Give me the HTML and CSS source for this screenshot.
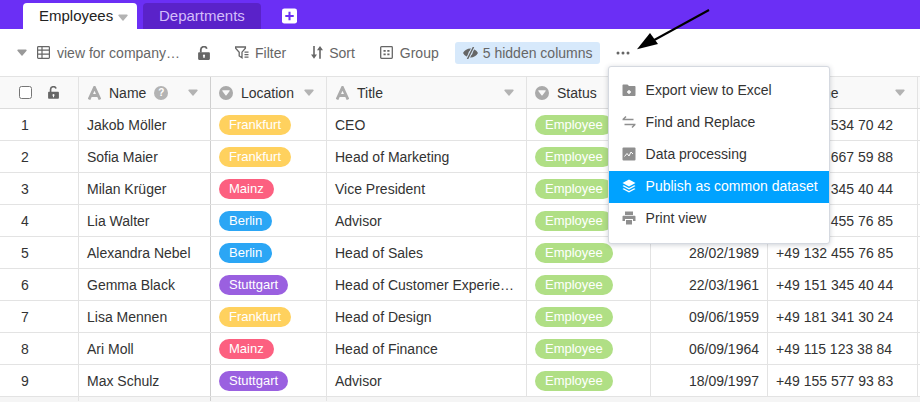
FILE: index.html
```html
<!DOCTYPE html>
<html lang="en">
<head>
    <meta charset="UTF-8">
    <meta name="viewport" content="width=device-width, initial-scale=1.0">
    <title>Employees</title>
    <link rel="stylesheet" href="styles.css">
</head>
<body>
    <svg class="defs" width="0" height="0">
        <symbol id="caret" viewBox="0 0 10 7"><path d="M1 .6h8a.7.7 0 0 1 .55 1.1L5.500 6.400a.7.7 0 0 1-1 0L.45 1.700A.7.7 0 0 1 1 .6z"/></symbol>
        <symbol id="lock" viewBox="0 0 12 14"><path d="M1.200 6.200h9.600c.6 0 1.100.5 1.100 1.100v5.500c0 .6-.5 1.100-1.100 1.100H1.200c-.6 0-1.100-.5-1.100-1.100V7.300c0-.6.5-1.100 1.100-1.100zM6 8.600a1.200 1.200 0 0 0-.6 2.200v1.300h1.200v-1.300A1.200 1.200 0 0 0 6 8.600z"/><path d="M2.800 6.500V3.600a3.100 3.100 0 0 1 6-.9" fill="none" stroke="currentColor" stroke-width="1.800"/></symbol>
        <symbol id="letter" viewBox="0 0 13 14"><path d="M1 13.500 6.500 1.500 12 13.500M3 9.500h7" fill="none" stroke="currentColor" stroke-width="2.800"/></symbol>
        <symbol id="select" viewBox="0 0 14 14"><path d="M7 0a7 7 0 1 1 0 14A7 7 0 0 1 7 0zM3.300 5l3.200 4.300c.3.300.7.300 1 0L10.700 5c.2-.3 0-.7-.4-.7H3.700c-.4 0-.6.400-.4.700z" fill-rule="evenodd"/></symbol>
    </svg>

    <div class="topbar">
        <div class="tab tab-active">Employees <svg class="caret caret-tab"><use href="#caret"/></svg></div>
        <div class="tab tab-other">Departments</div>
        <svg class="tab-add" viewBox="0 0 16 16"><rect width="16" height="16" rx="2.500" fill="#fff"/><path d="M8 3.500v9M3.500 8h9" stroke="#6b2ff5" stroke-width="2.200"/></svg>
    </div>

    <div class="toolbar">
        <svg class="caret caret-view"><use href="#caret"/></svg>
        <svg class="tool-icon view-icon" viewBox="0 0 13 13" fill="none" stroke="currentColor" stroke-width="1.200"><rect x=".6" y=".6" width="11.800" height="11.800" rx=".8"/><path d="M.6 4.200h11.800M.6 8.200h11.800M5 .6v11.800"/></svg>
        <span class="view-name">view for company…</span>
        <svg class="tool-lock"><use href="#lock"/></svg>
        <svg class="tool-icon filter-icon" viewBox="0 0 14 13"><path d="M.6 1h9.800v1.200L7 6.200v5.600L4.200 10V6.200L.6 2.200z" fill="none" stroke="currentColor" stroke-width="1.300"/><path d="M9.500 5.500h4v1.300h-4zM9.500 8h4v1.300h-4zM9.500 10.500h4v1.300h-4z" fill="currentColor"/></svg>
        <span class="tool-label filter-label">Filter</span>
        <svg class="tool-icon sort-icon" viewBox="0 0 12 13" fill="currentColor"><path d="M2.200 0h1.600v8.500H6L3 12.800 0 8.500h2.200zM8.200 12.800h1.600V4.300H12L9 0 6 4.300h2.200z"/></svg>
        <span class="tool-label sort-label">Sort</span>
        <svg class="tool-icon group-icon" viewBox="0 0 13 13" fill="none" stroke="currentColor" stroke-width="1.300"><rect x=".7" y=".7" width="11.600" height="11.600" rx=".8"/><path d="M3.500 4h2.200v1.800H3.500zM7.300 4h2.200v1.800H7.300zM3.500 7.400h2.200v1.800H3.500zM7.300 7.400h2.200v1.800H7.300z" fill="currentColor" stroke="none"/></svg>
        <span class="tool-label">Group</span>
        <div class="hidden-cols">
            <svg class="eye-icon" viewBox="0 0 15 12"><path d="M0 6c1.700-2.900 4.300-4.500 7.500-4.500S13.300 3.100 15 6c-1.700 2.900-4.300 4.500-7.500 4.500S1.700 8.900 0 6z" fill="currentColor"/><circle cx="7.500" cy="6" r="2" fill="#d7e9fb"/><path d="M4.500 12 10.500 0" stroke="#d7e9fb" stroke-width="3.400"/><path d="M4.500 12 10.500 0" stroke="currentColor" stroke-width="1.500"/></svg>
            5 hidden columns
        </div>
        <svg class="dots" viewBox="0 0 14 4" fill="currentColor"><circle cx="2" cy="2" r="1.500"/><circle cx="7" cy="2" r="1.500"/><circle cx="12" cy="2" r="1.500"/></svg>
    </div>

    <div class="grid">
        <div class="row head">
            <div class="cell c-index"><input type="checkbox" class="check"><svg class="head-lock"><use href="#lock"/></svg></div>
            <div class="cell c-name"><svg class="type-letter"><use href="#letter"/></svg><span>Name</span><span class="help">?</span><svg class="caret caret-head"><use href="#caret"/></svg></div>
            <div class="cell c-loc"><svg class="type-select"><use href="#select"/></svg><span>Location</span><svg class="caret caret-head"><use href="#caret"/></svg></div>
            <div class="cell c-title"><svg class="type-letter"><use href="#letter"/></svg><span>Title</span><svg class="caret caret-head"><use href="#caret"/></svg></div>
            <div class="cell c-status"><svg class="type-select"><use href="#select"/></svg><span>Status</span></div>
            <div class="cell c-date"></div>
            <div class="cell c-phone"><span class="phone-head">Phone</span><svg class="caret caret-head"><use href="#caret"/></svg></div>
        </div>

        <div class="row">
            <div class="cell c-index num">1</div><div class="cell c-name">Jakob Möller</div>
            <div class="cell c-loc"><span class="pill frankfurt">Frankfurt</span></div><div class="cell c-title">CEO</div>
            <div class="cell c-status"><span class="pill employee">Employee</span></div><div class="cell c-date"></div>
            <div class="cell c-phone phone-tail">534 70 42</div>
        </div>
        <div class="row">
            <div class="cell c-index num">2</div><div class="cell c-name">Sofia Maier</div>
            <div class="cell c-loc"><span class="pill frankfurt">Frankfurt</span></div><div class="cell c-title">Head of Marketing</div>
            <div class="cell c-status"><span class="pill employee">Employee</span></div><div class="cell c-date"></div>
            <div class="cell c-phone phone-tail">667 59 88</div>
        </div>
        <div class="row">
            <div class="cell c-index num">3</div><div class="cell c-name">Milan Krüger</div>
            <div class="cell c-loc"><span class="pill mainz">Mainz</span></div><div class="cell c-title">Vice President</div>
            <div class="cell c-status"><span class="pill employee">Employee</span></div><div class="cell c-date"></div>
            <div class="cell c-phone phone-tail">345 40 44</div>
        </div>
        <div class="row">
            <div class="cell c-index num">4</div><div class="cell c-name">Lia Walter</div>
            <div class="cell c-loc"><span class="pill berlin">Berlin</span></div><div class="cell c-title">Advisor</div>
            <div class="cell c-status"><span class="pill employee">Employee</span></div><div class="cell c-date"></div>
            <div class="cell c-phone phone-tail">455 76 85</div>
        </div>
        <div class="row">
            <div class="cell c-index num">5</div><div class="cell c-name">Alexandra Nebel</div>
            <div class="cell c-loc"><span class="pill berlin">Berlin</span></div><div class="cell c-title">Head of Sales</div>
            <div class="cell c-status"><span class="pill employee">Employee</span></div><div class="cell c-date">28/02/1989</div>
            <div class="cell c-phone">+49 132 455 76 85</div>
        </div>
        <div class="row">
            <div class="cell c-index num">6</div><div class="cell c-name">Gemma Black</div>
            <div class="cell c-loc"><span class="pill stuttgart">Stuttgart</span></div><div class="cell c-title"><span class="clip">Head of Customer Experience</span></div>
            <div class="cell c-status"><span class="pill employee">Employee</span></div><div class="cell c-date">22/03/1961</div>
            <div class="cell c-phone">+49 151 345 40 44</div>
        </div>
        <div class="row">
            <div class="cell c-index num">7</div><div class="cell c-name">Lisa Mennen</div>
            <div class="cell c-loc"><span class="pill frankfurt">Frankfurt</span></div><div class="cell c-title">Head of Design</div>
            <div class="cell c-status"><span class="pill employee">Employee</span></div><div class="cell c-date">09/06/1959</div>
            <div class="cell c-phone">+49 181 341 30 24</div>
        </div>
        <div class="row">
            <div class="cell c-index num">8</div><div class="cell c-name">Ari Moll</div>
            <div class="cell c-loc"><span class="pill mainz">Mainz</span></div><div class="cell c-title">Head of Finance</div>
            <div class="cell c-status"><span class="pill employee">Employee</span></div><div class="cell c-date">06/09/1964</div>
            <div class="cell c-phone">+49 115 123 38 84</div>
        </div>
        <div class="row">
            <div class="cell c-index num">9</div><div class="cell c-name">Max Schulz</div>
            <div class="cell c-loc"><span class="pill stuttgart">Stuttgart</span></div><div class="cell c-title">Advisor</div>
            <div class="cell c-status"><span class="pill employee">Employee</span></div><div class="cell c-date">18/09/1997</div>
            <div class="cell c-phone">+49 155 577 93 83</div>
        </div>
        <div class="row row-end">
            <div class="cell c-index"></div><div class="cell c-name"></div><div class="cell c-loc"></div>
        </div>
    </div>

    <div class="menu">
        <div class="menu-item">
            <svg viewBox="0 0 14 14" fill="currentColor"><path d="M1.500 1.500h4l1.500 1.500h5.500c.6 0 1 .4 1 1v8c0 .6-.4 1-1 1h-11c-.6 0-1-.4-1-1V2.500c0-.6.4-1 1-1z"/><path d="M6.300 7h1.400v1.300H9v1.400H7.700V11H6.300V9.700H5V8.300h1.300z" fill="#fff"/></svg>
            Export view to Excel
        </div>
        <div class="menu-item">
            <svg viewBox="0 0 14 14" fill="none" stroke="currentColor" stroke-width="1.500"><path d="M.5 4.500h11M4 1.500l-3 3M13.500 9.500h-11M10 12.500l3-3"/></svg>
            Find and Replace
        </div>
        <div class="menu-item">
            <svg viewBox="0 0 14 14"><rect x=".5" y=".5" width="13" height="13" rx="1" fill="currentColor"/><path d="m2.500 9.500 2.500-3 2 2.500 2-4 2 2" fill="none" stroke="#fff" stroke-width="1"/></svg>
            Data processing
        </div>
        <div class="menu-item menu-active">
            <svg viewBox="0 0 14 14" fill="currentColor"><path d="M7 .5 13.500 4 7 7.500.5 4z"/><path d="M1.800 6.300 7 9l5.200-2.700 1.300.7L7 10.500.5 7z"/><path d="M1.800 9.300 7 12l5.200-2.700 1.300.7L7 13.500.5 10z"/></svg>
            Publish as common dataset
        </div>
        <div class="menu-item">
            <svg viewBox="0 0 14 14" fill="currentColor"><path d="M3 .5h8V4H3z"/><path d="M1.500 4.700h11c.6 0 1 .4 1 1V10H11V8H3v2H.5V5.700c0-.6.4-1 1-1z"/><path d="M4 9h6v4.500H4z"/></svg>
            Print view
        </div>
    </div>

    <svg class="arrow" viewBox="0 0 85 50"><path d="M79 5 17 39" stroke="#000" stroke-width="2"/><path d="M7 44.300 20 28l8 11z" fill="#000"/></svg>
</body>
</html>
```

FILE: styles.css
```css
body {
    font-family: "Liberation Sans", Arial, sans-serif;
    font-size: 14px;
    margin: 0;
    padding: 0;
    height: 402px;
    overflow: hidden;
    position: relative;
    color: #333;
    background-color: #f5f5f5;
}
.defs {
    position: absolute;
}
.caret {
    fill: #b3b3b3;
    width: 10px;
    height: 7px;
    flex: none;
}

/* top bar */
.topbar {
    height: 29px;
    background-color: #6b2ff5;
    display: flex;
    align-items: flex-end;
    padding-left: 23px;
}
.tab {
    height: 26px;
    font-size: 15px;
    line-height: 25px;
    border-radius: 4px 4px 0 0;
    box-sizing: border-box;
}
.tab-active {
    width: 114px;
    padding-left: 16px;
    background-color: white;
    color: #222;
    white-space: nowrap;
}
.caret-tab {
    margin-left: 1px;
}
.tab-other {
    width: 118px;
    margin-left: 6px;
    padding-left: 16px;
    background-color: #5a22c9;
    color: #d4bdfb;
}
.tab-add {
    width: 15px;
    height: 16px;
    margin: 0 0 5px 21px;
}

/* toolbar */
.toolbar {
    height: 47px;
    background-color: white;
    display: flex;
    align-items: center;
    padding-left: 17px;
    color: #666;
    box-sizing: border-box;
}
.caret-view {
    fill: #999;
}
.tool-icon {
    flex: none;
    height: 13px;
}
.view-icon {
    width: 13px;
    margin-left: 10px;
}
.view-name {
    margin-left: 7px;
    width: 123px;
    white-space: nowrap;
}
.tool-lock {
    width: 12px;
    height: 14px;
    margin-left: 18px;
    fill: #666;
}
.filter-icon {
    width: 14px;
    margin-left: 25px;
}
.tool-label {
    margin-left: 7px;
}
.filter-label {
    margin-left: 6px;
}
.sort-icon {
    width: 12px;
    margin-left: 25px;
}
.sort-label {
    margin-left: 6px;
}
.group-icon {
    width: 13px;
    margin-left: 25px;
}
.hidden-cols {
    margin-left: 16px;
    height: 22px;
    width: 145px;
    box-sizing: border-box;
    padding-left: 8px;
    background-color: #d7e9fb;
    border-radius: 3px;
    display: flex;
    align-items: center;
    gap: 5px;
    white-space: nowrap;
}
.eye-icon {
    width: 15px;
    height: 12px;
    flex: none;
}
.dots {
    width: 14px;
    height: 4px;
    margin-left: 16px;
    flex: none;
}

/* table */
.grid {
    background-color: #f5f5f5;
}
.row {
    display: flex;
    height: 32px;
    box-sizing: border-box;
    padding-right: 2px;
    background-color: white;
    border-bottom: 1px solid #e3e3e3;
}
.head {
    height: 33px;
    background-color: #f9f9f9;
    border-top: 1px solid #e3e3e3;
    border-bottom: 1px solid #dcdcdc;
}
.row-end {
    height: 4px;
    background-color: #f5f5f5;
    border-bottom: none;
}
.cell {
    display: flex;
    align-items: center;
    box-sizing: border-box;
    padding: 0 12px 0 8px;
    border-right: 1px solid #e3e3e3;
    white-space: nowrap;
    flex: none;
}
.c-index { width: 79px; }
.c-name { width: 132px; border-right-color: #cfcfcf; }
.c-loc { width: 116px; }
.c-title { width: 200px; }
.c-status { width: 124px; }
.c-date { width: 117px; justify-content: flex-end; padding-right: 8px; }
.c-phone { width: 150px; }
.phone-tail {
    justify-content: flex-end;
    padding-right: 24px;
}
.num {
    padding-left: 21px;
}
.head .cell {
    color: #333;
}
.check {
    width: 13px;
    height: 13px;
    margin: 0 0 0 11px;
    flex: none;
}
.head-lock {
    width: 11px;
    height: 13px;
    margin-left: 16px;
    fill: #666;
    color: #666;
}
.type-letter {
    width: 13px;
    height: 14px;
    color: #aaa;
    margin-right: 8px;
    flex: none;
}
.type-select {
    width: 14px;
    height: 14px;
    fill: #aaa;
    margin-right: 8px;
    flex: none;
}
.help {
    width: 14px;
    height: 14px;
    line-height: 14px;
    border-radius: 50%;
    margin-left: 8px;
    text-align: center;
    font-size: 10px;
    font-weight: bold;
    color: white;
    background-color: #b3b3b3;
}
.caret-head {
    margin-left: auto;
}
.c-name.cell .type-letter {
    margin-left: 1px;
}
.c-title.cell .type-letter {
    margin-left: 1px;
}
.phone-head {
    margin-left: 22px;
}
.clip {
    overflow: hidden;
    text-overflow: ellipsis;
}
.pill {
    font-size: 13px;
    height: 20px;
    line-height: 19px;
    padding: 0 10px;
    border-radius: 10px;
    color: white;
}
.frankfurt { background-color: #ffd15e; }
.mainz { background-color: #fc6080; }
.berlin { background-color: #2ba6f5; }
.stuttgart { background-color: #9a60e0; }
.employee { background-color: #b0df85; }

/* menu over the table */
.menu {
    position: absolute;
    left: 608px;
    top: 66px;
    width: 222px;
    box-sizing: border-box;
    padding: 8px 0;
    background-color: white;
    border: 1px solid #d5d9e0;
    border-radius: 3px;
    box-shadow: 0 1px 5px rgba(60, 70, 90, 0.25);
}
.menu-item {
    height: 32px;
    display: flex;
    align-items: center;
    gap: 9.6px;
    padding: 0 0 2px 13px;
    box-sizing: border-box;
    color: #333;
    white-space: nowrap;
}
.menu-item svg {
    width: 14px;
    height: 14px;
    color: #8f8f8f;
    flex: none;
}
.menu-active {
    background-color: #00a2ff;
    color: white;
}
.menu-active svg {
    color: white;
}
.arrow {
    position: absolute;
    left: 630px;
    top: 5px;
    width: 85px;
    height: 50px;
}
```
